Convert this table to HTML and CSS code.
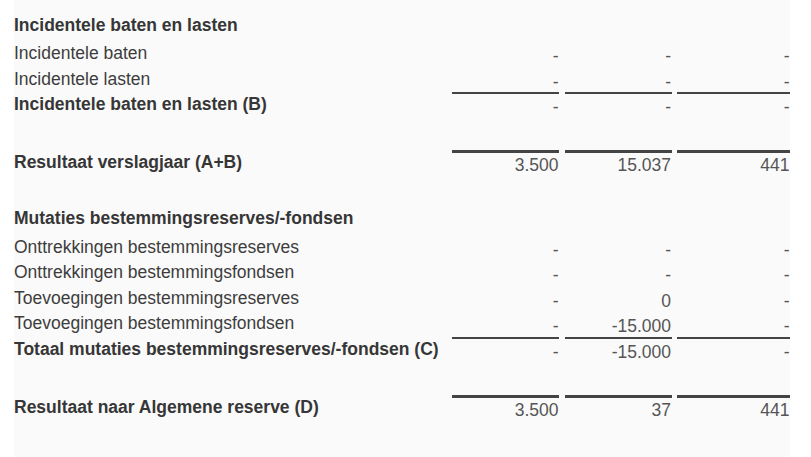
FILE: index.html
```html
<!DOCTYPE html>
<html lang="nl">
<head>
<meta charset="utf-8">
<title>Staat van baten en lasten</title>
<link rel="stylesheet" href="styles.css">
</head>
<body>
<div class="panel">
  <div class="row head"><span class="label b">Incidentele baten en lasten</span></div>
  <div class="row"><span class="label">Incidentele baten</span><span class="val">-</span><span class="val">-</span><span class="val">-</span></div>
  <div class="row"><span class="label">Incidentele lasten</span><span class="val">-</span><span class="val">-</span><span class="val">-</span></div>
  <div class="row"><span class="label b">Incidentele baten en lasten (B)</span><span class="val thin">-</span><span class="val thin">-</span><span class="val thin">-</span></div>
  <div class="spacer sp1"></div>
  <div class="row"><span class="label b">Resultaat verslagjaar (A+B)</span><span class="val thick">3.500</span><span class="val thick">15.037</span><span class="val thick">441</span></div>
  <div class="spacer sp2"></div>
  <div class="row head head2"><span class="label b">Mutaties bestemmingsreserves/-fondsen</span></div>
  <div class="row"><span class="label">Onttrekkingen bestemmingsreserves</span><span class="val">-</span><span class="val">-</span><span class="val">-</span></div>
  <div class="row"><span class="label">Onttrekkingen bestemmingsfondsen</span><span class="val">-</span><span class="val">-</span><span class="val">-</span></div>
  <div class="row"><span class="label">Toevoegingen bestemmingsreserves</span><span class="val">-</span><span class="val">0</span><span class="val">-</span></div>
  <div class="row"><span class="label">Toevoegingen bestemmingsfondsen</span><span class="val">-</span><span class="val">-15.000</span><span class="val">-</span></div>
  <div class="row"><span class="label b">Totaal mutaties bestemmingsreserves/-fondsen (C)</span><span class="val thin">-</span><span class="val thin">-15.000</span><span class="val thin">-</span></div>
  <div class="spacer sp3"></div>
  <div class="row"><span class="label b">Resultaat naar Algemene reserve (D)</span><span class="val thick">3.500</span><span class="val thick">37</span><span class="val thick">441</span></div>
</div>
</body>
</html>
```
FILE: styles.css
```css
html, body {
  margin: 0;
  padding: 0;
  background: #ffffff;
}

body {
  font-family: "Liberation Sans", Arial, Helvetica, sans-serif;
  font-size: 17.5px;
}

.panel {
  margin-left: 14px;
  width: 776px;
  min-height: 457px;
  box-sizing: border-box;
  padding-top: 12.5px;
  background: #fafafa;
}

.row {
  display: grid;
  grid-template-columns: 1fr 107px 107px 113px;
  column-gap: 5.5px;
  height: 25.5px;
}

.head {
  height: 28.5px;
}

.head2 {
  height: 29px;
}

.label {
  line-height: 25.5px;
  color: #3d3d3d;
  white-space: nowrap;
}

.b {
  font-weight: bold;
  color: #363636;
}

.val {
  box-sizing: border-box;
  height: 25.5px;
  padding-top: 6px;
  padding-right: 0.5px;
  line-height: 19.5px;
  text-align: right;
  color: #555555;
  white-space: nowrap;
}

.thin {
  border-top: 2px solid #444444;
  padding-top: 4px;
}

.thick {
  border-top: 3px solid #444444;
  padding-top: 3px;
}

.spacer {
  height: 32px;
}

.sp2 {
  height: 30.5px;
}

.sp3 {
  height: 32.5px;
}
```
